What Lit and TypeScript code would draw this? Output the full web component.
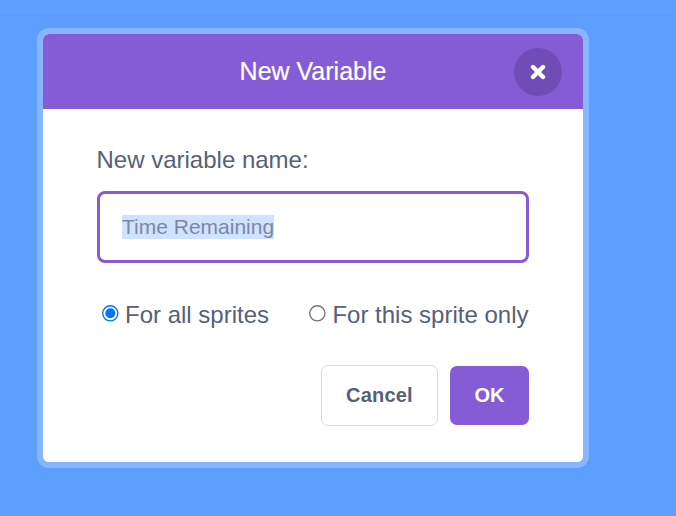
import { LitElement, html, css } from "lit";
import { customElement } from "lit/decorators.js";

@customElement("app-root")
export class AppRoot extends LitElement {
  static styles = css`
    :host {
      display: block;
      width: 676px;
      height: 516px;
      overflow: hidden;
      background: #5d9fff;
      font-family: "Liberation Sans", Arial, sans-serif;
      color: #575f7a;
    }
    .strip {
      height: 16px;
      box-sizing: border-box;
      border-bottom: 1px solid #579bfb;
    }
    .modal {
      box-sizing: border-box;
      width: 552px;
      height: 440px;
      margin: 12px 0 0 37px;
      border: 6px solid #87b6ff;
      border-radius: 12px;
      background: #fff;
      display: flex;
      flex-direction: column;
    }
    .card {
      flex: 1;
      display: flex;
      flex-direction: column;
      border-radius: 6px;
      overflow: hidden;
      background: #fff;
    }
    .header {
      height: 75px;
      flex: none;
      background: #855cd6;
      color: #fff;
      display: grid;
      grid-template-columns: 1fr auto 1fr;
      align-items: center;
      padding-right: 21px;
      padding-left: 21px;
      box-sizing: border-box;
    }
    .title {
      grid-column: 2;
      font-size: 25px;
      -webkit-text-stroke: 0.2px #fff;
    }
    .close {
      grid-column: 3;
      justify-self: end;
      width: 48px;
      height: 48px;
      border-radius: 50%;
      background: #704cb6;
      display: flex;
      align-items: center;
      justify-content: center;
    }
    .close svg {
      display: block;
    }
    .body {
      flex: 1;
      padding: 37px 54px 0;
      display: flex;
      flex-direction: column;
    }
    .label {
      font-size: 24px;
      line-height: 28px;
      margin-left: -0.5px;
    }
    .field {
      margin-top: 17px;
      height: 72px;
      box-sizing: border-box;
      border: 3px solid #855cd6;
      border-radius: 8px;
      padding: 0 22px;
      display: flex;
      align-items: center;
    }
    .selected {
      font-size: 21px;
      line-height: 24px;
      color: #7d87a4;
      background: #cfe2ff;
    }
    .radios {
      margin-top: 38px;
      display: flex;
      justify-content: space-between;
      padding: 0 0.5px 0 5px;
      font-size: 24px;
      line-height: 28px;
    }
    .opt {
      display: flex;
      align-items: center;
      gap: 5px;
    }
    .opt input {
      margin: 0 0 2px;
      width: 13px;
      height: 13px;
      zoom: 1.385;
    }
    .actions {
      margin-top: 36px;
      display: flex;
      justify-content: flex-end;
      align-items: center;
      gap: 12px;
    }
    button {
      font: bold 20px "Liberation Sans", Arial, sans-serif;
      border-radius: 7px;
      padding: 0;
    }
    .cancel {
      width: 117px;
      height: 61px;
      background: #fff;
      color: #575f7a;
      border: 1px solid #dbdbdb;
      letter-spacing: 0.2px;
    }
    .ok {
      width: 79px;
      height: 59px;
      background: #855cd6;
      color: #fff;
      border: none;
    }
  `;

  render() {
    return html`
      <div class="strip"></div>
      <div class="modal">
        <div class="card">
          <div class="header">
            <div class="title">New Variable</div>
            <div class="close">
              <svg width="16" height="16" viewBox="0 0 16 16" fill="none">
                <path d="M3 3 L13 13 M13 3 L3 13" stroke="#fff" stroke-width="4.4" stroke-linecap="round" />
              </svg>
            </div>
          </div>
          <div class="body">
            <div class="label">New variable name:</div>
            <div class="field"><span class="selected">Time Remaining</span></div>
            <div class="radios">
              <label class="opt"><input type="radio" name="scope" checked />For all sprites</label>
              <label class="opt"><input type="radio" name="scope" />For this sprite only</label>
            </div>
            <div class="actions">
              <button class="cancel">Cancel</button>
              <button class="ok">OK</button>
            </div>
          </div>
        </div>
      </div>
    `;
  }
}
